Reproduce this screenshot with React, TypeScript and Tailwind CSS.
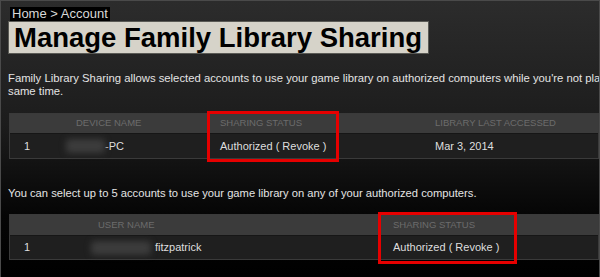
const font = { fontFamily: '"Liberation Sans", Arial, sans-serif' };

function Blurred({ className }: { className: string }) {
  return <div className={`h-[14px] rounded-sm bg-[#3c3c3c] blur-[3px] ${className}`} />;
}

function DeviceTable() {
  return (
    <div className="ml-[8px] mt-[15px] w-[590px] border border-[#3a3a3a] bg-[#1f1f1f]">
      <div className="grid h-[20px] grid-cols-[56px_154px_215px_1fr] items-center border-b border-[#161616] bg-[#3b3b3b] text-[9.5px] uppercase text-[#6c6c6c]">
        <span />
        <span className="pl-[10px]">Device Name</span>
        <span>Sharing Status</span>
        <span>Library Last Accessed</span>
      </div>
      <div className="grid h-[24px] grid-cols-[56px_154px_215px_1fr] items-center text-[11px] text-[#dedede]">
        <span className="pl-[14px]">1</span>
        <span className="flex items-center">
          <Blurred className="w-[39px]" />
          <span>-PC</span>
        </span>
        <span>Authorized ( Revoke )</span>
        <span>Mar 3, 2014</span>
      </div>
    </div>
  );
}

function UserTable() {
  return (
    <div className="ml-[8px] mt-[14px] w-[590px] border border-[#3a3a3a] bg-[#1f1f1f]">
      <div className="grid h-[21px] grid-cols-[81px_302px_1fr] items-center border-b border-[#161616] bg-[#3b3b3b] text-[9.5px] uppercase text-[#6c6c6c]">
        <span />
        <span className="pl-[7px]">User Name</span>
        <span>Sharing Status</span>
      </div>
      <div className="grid h-[23px] grid-cols-[81px_302px_1fr] items-center text-[11px] text-[#dedede]">
        <span className="pl-[14px]">1</span>
        <span className="flex items-center gap-[4px]">
          <Blurred className="w-[60px]" />
          <span>fitzpatrick</span>
        </span>
        <span>Authorized ( Revoke )</span>
      </div>
    </div>
  );
}

export default function App() {
  return (
    <div
      className="relative h-[277px] w-[600px] overflow-hidden border-x border-t border-[#4a4a4a] bg-[linear-gradient(180deg,#2c2c2c_0%,#1c1c1c_45%,#050505_78%,#000000_100%)]"
      style={font}
    >
      <div className="ml-[9px] mt-[6px] w-fit bg-black px-[2px] text-[13px] leading-[14px] text-[#d8d8d8]">
        Home &gt; Account
      </div>
      <div className="ml-[7px] flex h-[33px] w-[421px] items-center border border-[#5a5a55] bg-[#d6d3c9] pl-[5px] text-[27.5px] font-bold leading-none text-black">
        Manage Family Library Sharing
      </div>
      <p className="ml-[7px] mt-[18px] whitespace-nowrap text-[11.3px] leading-[13px] text-[#e4e4e4]">
        Family Library Sharing allows selected accounts to use your game library on authorized computers while you're not playing. Only one user can play at the
        <br />
        same time.
      </p>
      <DeviceTable />
      <p className="ml-[7px] mt-[28px] whitespace-nowrap text-[11.2px] leading-[13px] text-[#e4e4e4]">
        You can select up to 5 accounts to use your game library on any of your authorized computers.
      </p>
      <UserTable />

      <div className="absolute left-[206px] top-[110px] h-[51px] w-[132px] border-[3px] border-[#e60000]" />
      <div className="absolute left-[377px] top-[211px] h-[52px] w-[139px] border-[3px] border-[#e60000]" />
    </div>
  );
}
